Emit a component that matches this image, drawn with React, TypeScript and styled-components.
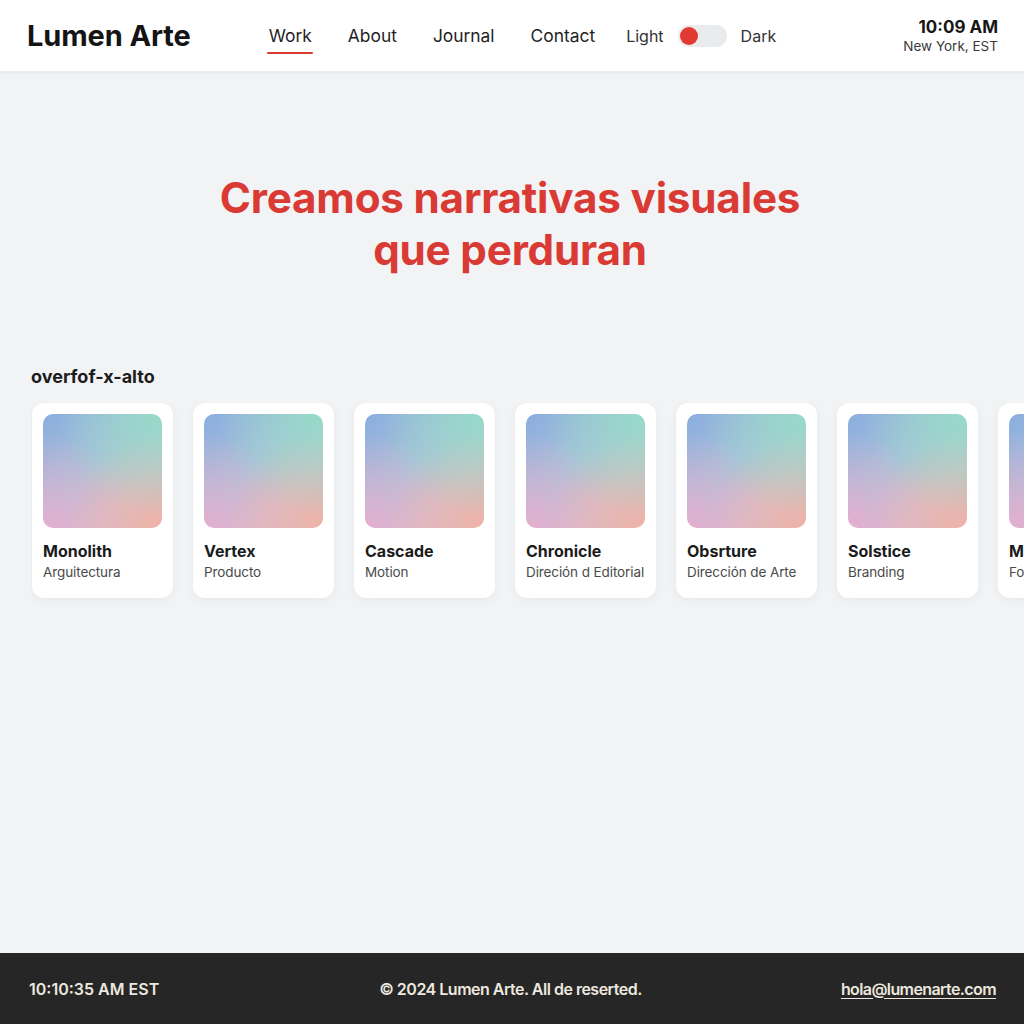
import styled, { createGlobalStyle } from "styled-components";

const GlobalStyle = createGlobalStyle`
  html, body {
    margin: 0;
    padding: 0;
    background: #f2f3f4;
    font-family: Inter, "Noto Sans", "Liberation Sans", sans-serif;
    color: #1c1c1c;
  }
  * { box-sizing: border-box; }
`;

const Page = styled.div`
  min-height: 100vh;
  display: flex;
  flex-direction: column;
  overflow: hidden;
`;

const Header = styled.header`
  height: 72px;
  background: #ffffff;
  display: flex;
  align-items: center;
  padding: 0 26px 0 27px;
  box-shadow: 0 1px 3px rgba(0, 0, 0, 0.06);
  border-bottom: 1px solid #ececec;
`;

const Logo = styled.div`
  font-size: 29px;
  font-weight: 700;
  letter-spacing: -0.1px;
  color: #141414;
`;

const Nav = styled.nav`
  display: flex;
  align-items: center;
  gap: 36px;
  margin-left: 78px;
`;

const NavLink = styled.a<{ $active?: boolean }>`
  position: relative;
  font-size: 17.4px;
  color: #1f1f1f;
  text-decoration: none;
  padding: 4px 0;

  &::after {
    content: "";
    display: ${(p) => (p.$active ? "block" : "none")};
    position: absolute;
    left: -2px;
    right: -1px;
    bottom: -4px;
    height: 2px;
    border-radius: 1px;
    background: #d93a34;
  }
`;

const ThemeSwitch = styled.div`
  display: flex;
  align-items: center;
  gap: 14px;
  margin-left: 31px;
  font-size: 16px;
  color: #333;
`;

const Track = styled.div`
  width: 49px;
  height: 22px;
  border-radius: 11px;
  background: #e9ebed;
  padding: 2px;
  display: flex;
  align-items: center;
`;

const Knob = styled.div`
  width: 18px;
  height: 18px;
  border-radius: 50%;
  background: #e13a33;
`;

const Clock = styled.div`
  margin-left: auto;
  text-align: right;
  display: flex;
  flex-direction: column;
  gap: 1px;
`;

const Time = styled.div`
  font-size: 17px;
  font-weight: 700;
  color: #161616;
`;

const Place = styled.div`
  font-size: 13.5px;
  color: #3a3a3a;
`;

const Main = styled.main`
  flex: 1;
  display: flex;
  flex-direction: column;
`;

const Hero = styled.h1`
  margin: 100px 0 0;
  text-align: center;
  font-size: 42.2px;
  line-height: 52px;
  font-weight: 700;
  letter-spacing: -0.2px;
  color: #d93a34;
  padding-right: 4px;
`;

const Section = styled.section`
  margin-top: 90px;
  padding-left: 31px;
`;

const Label = styled.h2`
  margin: 0 0 16px;
  font-size: 18px;
  font-weight: 700;
  color: #1c1c1c;
`;

const Row = styled.div`
  display: flex;
  gap: 20px;
  overflow-x: auto;
  padding: 0 0 20px 1px;
  scrollbar-width: none;
  &::-webkit-scrollbar { display: none; }
`;

const Card = styled.div`
  flex: 0 0 141px;
  width: 141px;
  min-width: 0;
  height: 195px;
  overflow: hidden;
  background: #ffffff;
  border-radius: 12px;
  padding: 11px;
  box-shadow: 0 2px 10px rgba(0, 0, 0, 0.05);
`;

const Thumb = styled.div`
  height: 114px;
  border-radius: 10px;
  background:
    radial-gradient(circle at 100% 0%, #95dac8 0%, rgba(149, 218, 200, 0) 62%),
    radial-gradient(circle at 100% 100%, #eeb3a8 0%, rgba(238, 179, 168, 0) 58%),
    radial-gradient(circle at 0% 100%, #e5aecf 0%, rgba(229, 174, 207, 0) 58%),
    linear-gradient(135deg, #8aaddf 0%, #a9c3d8 45%, #cfc2cf 70%, #dcb8c4 100%);
`;

const Title = styled.div`
  margin-top: 13px;
  font-size: 16px;
  font-weight: 700;
  color: #1b1b1b;
  white-space: nowrap;
`;

const Sub = styled.div`
  margin-top: 3px;
  font-size: 13.5px;
  letter-spacing: -0.1px;
  color: #4a4a4a;
  white-space: nowrap;
`;

const Footer = styled.footer`
  height: 71px;
  background: #262626;
  display: grid;
  grid-template-columns: 1fr auto 1fr;
  align-items: center;
  padding: 0 28px 0 29px;
  font-size: 16px;
  font-weight: 600;
  color: #ece8df;
`;

const Copy = styled.span`
  text-align: center;
  padding-right: 4px;
  letter-spacing: -0.5px;
`;

const Mail = styled.a`
  justify-self: end;
  color: #ece8df;
  text-decoration: underline;
  text-underline-offset: 3px;
  letter-spacing: -0.6px;
`;

const projects = [
  { title: "Monolith", sub: "Arguitectura" },
  { title: "Vertex", sub: "Producto" },
  { title: "Cascade", sub: "Motion" },
  { title: "Chronicle", sub: "Direción d Editorial" },
  { title: "Obsrture", sub: "Dirección de Arte" },
  { title: "Solstice", sub: "Branding" },
  { title: "Meridian", sub: "Fotografía" },
];

export default function App() {
  return (
    <Page>
      <GlobalStyle />
      <Header>
        <Logo>Lumen Arte</Logo>
        <Nav>
          <NavLink $active>Work</NavLink>
          <NavLink>About</NavLink>
          <NavLink>Journal</NavLink>
          <NavLink>Contact</NavLink>
        </Nav>
        <ThemeSwitch>
          <span>Light</span>
          <Track>
            <Knob />
          </Track>
          <span>Dark</span>
        </ThemeSwitch>
        <Clock>
          <Time>10:09 AM</Time>
          <Place>New York, EST</Place>
        </Clock>
      </Header>
      <Main>
        <Hero>
          Creamos narrativas visuales
          <br />
          que perduran
        </Hero>
        <Section>
          <Label>overfof-x-alto</Label>
          <Row>
            {projects.map((p) => (
              <Card key={p.title}>
                <Thumb />
                <Title>{p.title}</Title>
                <Sub>{p.sub}</Sub>
              </Card>
            ))}
          </Row>
        </Section>
      </Main>
      <Footer>
        <span>10:10:35 AM EST</span>
        <Copy>© 2024 Lumen Arte. All de reserted.</Copy>
        <Mail>hola@lumenarte.com</Mail>
      </Footer>
    </Page>
  );
}
